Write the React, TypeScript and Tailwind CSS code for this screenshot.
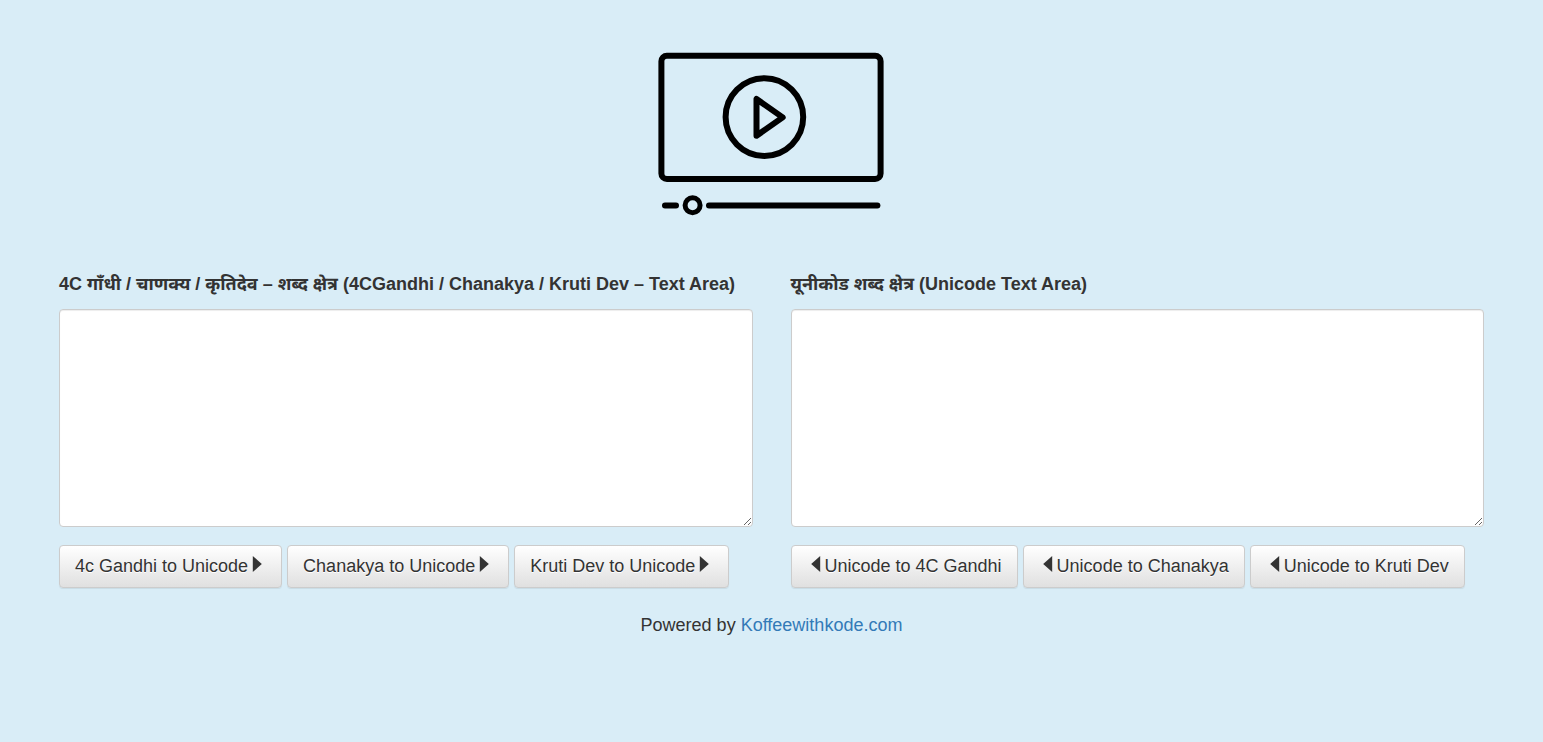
import type { ReactNode } from "react";

function VideoIcon() {
  return (
    <svg
      width="227"
      height="166"
      viewBox="0 0 227 166"
      fill="none"
      stroke="#000"
      strokeWidth="6"
      strokeLinecap="round"
      strokeLinejoin="round"
      role="img"
      aria-label="Video"
    >
      <rect x="3.4" y="3.7" width="219.2" height="123.3" rx="5.5" />
      <circle cx="106.4" cy="65.1" r="38.8" />
      <path d="M98.5 47v36.8l26.2-18.4z" />
      <path d="M7 153.4h11" />
      <circle cx="34.6" cy="153.3" r="7.5" strokeWidth="5" />
      <path d="M51 153.4h168.4" />
    </svg>
  );
}

function ArrowRight() {
  return (
    <svg className="mx-1 inline-block align-baseline" width="10" height="16" viewBox="0 0 10 16" fill="#333" aria-hidden="true">
      <path d="M.8 0l9 8-9 8z" />
    </svg>
  );
}

function ArrowLeft() {
  return (
    <svg className="mx-1 inline-block align-baseline" width="10" height="16" viewBox="0 0 10 16" fill="#333" aria-hidden="true">
      <path d="M9.2 0l-9 8 9 8z" />
    </svg>
  );
}

function ConvertButton({ children }: { children: ReactNode }) {
  return (
    <button
      type="button"
      className="cursor-pointer rounded border border-[#ccc] bg-linear-to-b from-white to-[#e0e0e0] px-[15px] py-2 text-lg leading-[25px] whitespace-nowrap shadow-[inset_0_1px_0_rgba(255,255,255,0.15),0_1px_1px_rgba(0,0,0,0.075)] [text-shadow:0_1px_0_#fff]"
    >
      {children}
    </button>
  );
}

function Editor({ id, label, children }: { id: string; label: string; children: ReactNode }) {
  return (
    <section className="min-w-0">
      <label htmlFor={id} className="mb-3 block text-lg leading-[26px] font-bold">
        {label}
      </label>
      <textarea
        id={id}
        className="block h-[218px] w-full resize rounded border border-[#ccc] bg-white px-3 py-2 text-lg shadow-[inset_0_1px_1px_rgba(0,0,0,0.075)] outline-none focus:border-[#66afe9]"
      />
      <div className="mt-[18px] flex flex-wrap gap-[5px]">{children}</div>
    </section>
  );
}

export default function App() {
  return (
    <div className="min-h-screen bg-[#d9edf7] px-[59px] pt-[52px] pb-10 font-['Liberation_Sans','Noto_Sans_Devanagari','Noto_Sans',sans-serif] text-lg text-[#333]">
      <header className="flex justify-center">
        <VideoIcon />
      </header>
      <main className="mt-[53px] grid gap-[38px] lg:grid-cols-2">
        <Editor
          id="legacy-text"
          label="4C गाँधी / चाणक्य / कृतिदेव – शब्द क्षेत्र (4CGandhi / Chanakya / Kruti Dev – Text Area)"
        >
          <ConvertButton>
            4c Gandhi to Unicode
            <ArrowRight />
          </ConvertButton>
          <ConvertButton>
            Chanakya to Unicode
            <ArrowRight />
          </ConvertButton>
          <ConvertButton>
            Kruti Dev to Unicode
            <ArrowRight />
          </ConvertButton>
        </Editor>
        <Editor id="unicode-text" label="यूनीकोड शब्द क्षेत्र (Unicode Text Area)">
          <ConvertButton>
            <ArrowLeft />
            Unicode to 4C Gandhi
          </ConvertButton>
          <ConvertButton>
            <ArrowLeft />
            Unicode to Chanakya
          </ConvertButton>
          <ConvertButton>
            <ArrowLeft />
            Unicode to Kruti Dev
          </ConvertButton>
        </Editor>
      </main>
      <footer className="mt-6 text-center leading-[26px]">
        Powered by{" "}
        <a href="#" className="text-[#337ab7] hover:underline">
          Koffeewithkode.com
        </a>
      </footer>
    </div>
  );
}
